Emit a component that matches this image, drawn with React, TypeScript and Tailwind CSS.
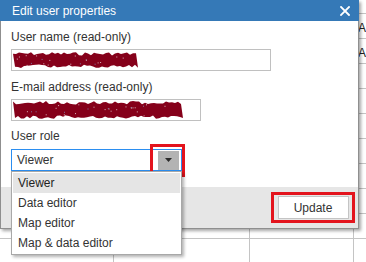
import React from "react";

function rnd(seed: number) {
  let s = seed;
  return () => {
    s = (s * 9301 + 49297) % 233280;
    return s / 233280;
  };
}

function Scribble({ w, h, seed }: { w: number; h: number; seed: number }) {
  const r = rnd(seed);
  const top: string[] = [];
  const bot: string[] = [];
  for (let x = 0; x <= w; x += 3) {
    top.push(`${x},${(r() * 3.5).toFixed(1)}`);
  }
  for (let x = w; x >= 0; x -= 3) {
    bot.push(`${x},${(h - r() * 3.5).toFixed(1)}`);
  }
  const dots: React.ReactNode[] = [];
  for (let i = 0; i < Math.floor(w / 6); i++) {
    const x = r() * (w - 6) + 3;
    const y = r() * (h - 6) + 3;
    dots.push(
      <rect key={i} x={x.toFixed(1)} y={y.toFixed(1)} width="1" height="1" fill={i % 4 === 0 ? "#7fa6d6" : "#ffffff"} opacity="0.7" />
    );
  }
  return (
    <svg width={w} height={h} viewBox={`0 0 ${w} ${h}`} className="block">
      <polygon points={[...top, ...bot].join(" ")} fill="#85001a" />
      {dots}
    </svg>
  );
}

export default function App() {
  const rows = Array.from({ length: 11 });
  return (
    <div className="relative w-[366px] h-[262px] overflow-hidden bg-white text-[12px] text-[#333] font-['Liberation_Sans',Arial,sans-serif]">
      {/* spreadsheet background */}
      <div className="flex flex-col">
        {rows.map((_, i) => (
          <div
            key={i}
            className={`flex border-b border-[#c4c4c4] ${i === 0 ? "h-[14px]" : "h-[25px]"}`}
          >
            <div className="w-[114px] border-r border-[#c4c4c4]" />
            <div className="w-[136px] border-r border-[#c4c4c4]" />
            <div className="w-[104px] border-r border-[#c4c4c4]" />
            <div className="flex-1 flex items-end pb-[3px] pl-[6px] leading-[14px] text-[#222]">
              {i === 1 || i === 2 ? "A" : ""}
            </div>
          </div>
        ))}
      </div>

      {/* dialog */}
      <div className="absolute left-0 top-0 w-[359px] flex flex-col shadow-[2px_2px_3px_rgba(0,0,0,0.35)]">
        <div className="h-[21px] bg-[#3579b7] flex items-center justify-between pl-[12px] pr-[8px] text-white leading-[14px]">
          <span>Edit user properties</span>
          <svg width="10" height="10" viewBox="0 0 10 10" className="mr-[1px]">
            <path d="M1 1 L9 9 M9 1 L1 9" stroke="#ffffff" strokeWidth="1.8" strokeLinecap="square" />
          </svg>
        </div>
        <div className="flex flex-col border-x border-b border-[#8f8f8f]">
          <div className="bg-white h-[166px] pt-[9px] pl-[10px] flex flex-col leading-[14px]">
            <div>User name (read-only)</div>
            <div className="mt-[5px] w-[260px] h-[22px] border border-[#c0c0c0] flex items-center pl-[1px]">
              <Scribble w={125} h={16} seed={7} />
            </div>
            <div className="mt-[9px]">E-mail address (read-only)</div>
            <div className="mt-[5px] w-[190px] h-[22px] border border-[#c0c0c0] flex items-center pl-[1px]">
              <Scribble w={170} h={18} seed={23} />
            </div>
            <div className="mt-[8px]">User role</div>
            <div className="relative mt-[6px] w-[171px]">
              <div className="h-[22px] border border-[#2b8ef0] flex items-center justify-between pl-[5px] pr-[2px]">
                <span>Viewer</span>
                <div className="w-[21px] h-[19px] bg-[#b3b3b3] flex items-center justify-center">
                  <svg width="7" height="4" viewBox="0 0 7 4">
                    <polygon points="0,0 7,0 3.5,4" fill="#2a2a2a" />
                  </svg>
                </div>
              </div>
              {/* red highlight around the arrow */}
              <div className="absolute left-[139px] top-[-5px] w-[35px] h-[33px] border-[3px] border-[#e3141d]" />
              {/* open dropdown list */}
              <div className="absolute left-0 top-[22px] w-[171px] z-10 bg-white border border-[#a8a8a8] p-[1px] shadow-[2px_2px_3px_rgba(0,0,0,0.3)] flex flex-col">
                <div className="h-[20px] bg-[#e5e5e5] flex items-center pl-[5px] text-[#222]">Viewer</div>
                <div className="h-[20px] flex items-center pl-[5px]">Data editor</div>
                <div className="h-[20px] flex items-center pl-[5px]">Map editor</div>
                <div className="h-[20px] flex items-center pl-[5px]">Map &amp; data editor</div>
              </div>
            </div>
          </div>
          <div className="h-[41px] bg-[#e6e6e6] flex items-center justify-end pr-[3px]">
            <div className="w-[84px] h-[31px] border-[3px] border-[#e3141d] flex items-center justify-center">
              <button className="w-[71px] h-[23px] bg-white border border-[#c4c4c4] text-[12px] text-[#333] leading-[14px]">
                Update
              </button>
            </div>
          </div>
        </div>
      </div>
    </div>
  );
}
